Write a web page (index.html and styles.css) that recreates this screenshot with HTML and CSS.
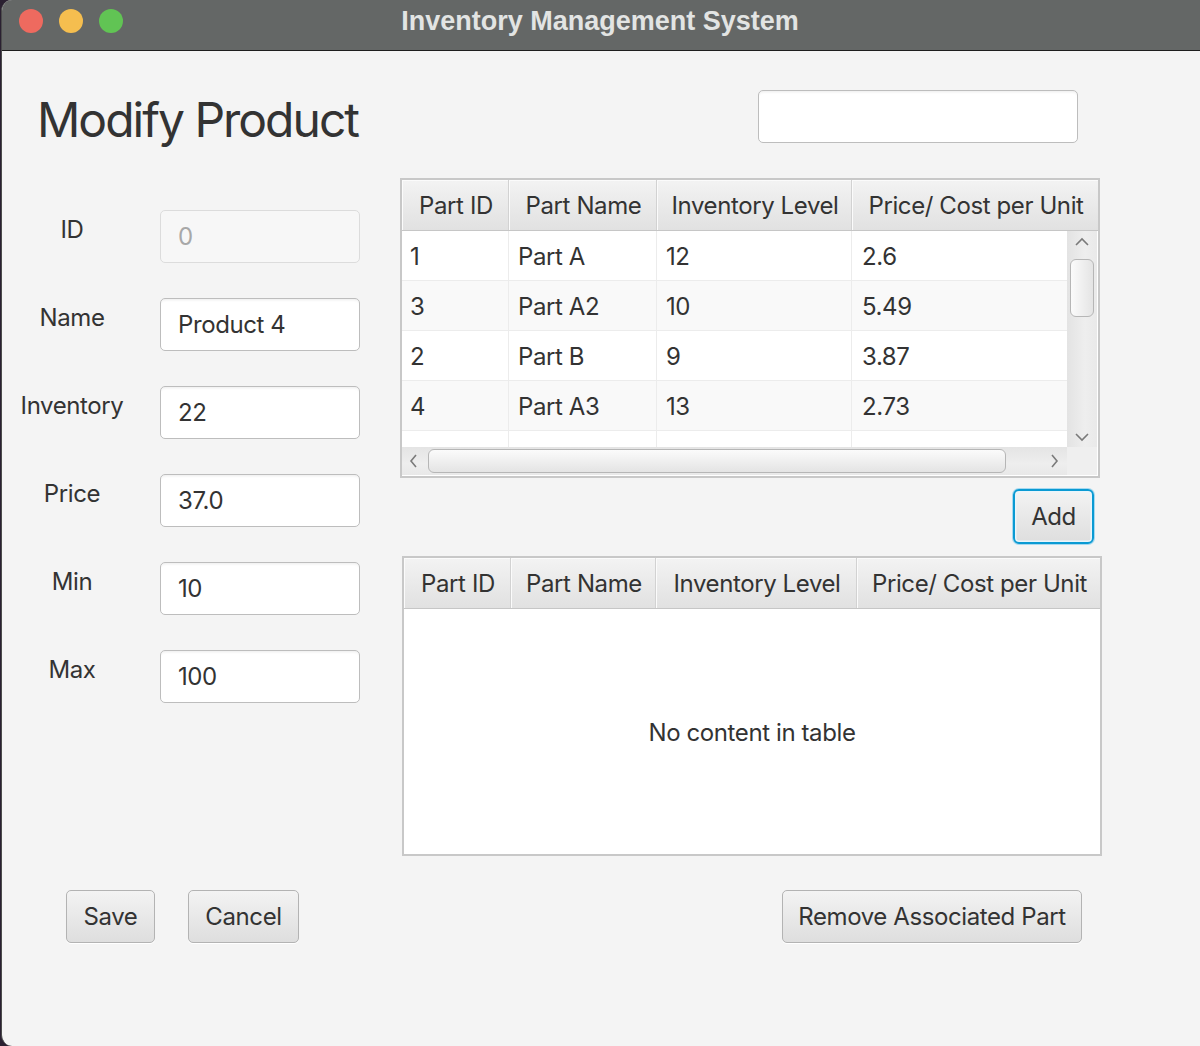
FILE: index.html
```html
<!DOCTYPE html>
<html lang="en">
<head>
<meta charset="utf-8">
<title>Inventory Management System</title>
<link rel="stylesheet" href="styles.css">
</head>
<body>
<div class="window">
  <header class="titlebar">
    <div class="lights">
      <span class="light red"></span>
      <span class="light yellow"></span>
      <span class="light green"></span>
    </div>
    <div class="wtitle">Inventory Management System</div>
  </header>

  <main class="content">
    <h1 class="heading">Modify Product</h1>
    <div class="search-wrap"><input class="field search" type="text" value=""></div>

    <section class="form">
      <label class="lbl">ID</label>
      <input class="field disabled" type="text" value="0" disabled>
      <label class="lbl">Name</label>
      <input class="field" type="text" value="Product 4">
      <label class="lbl">Inventory</label>
      <input class="field" type="text" value="22">
      <label class="lbl">Price</label>
      <input class="field" type="text" value="37.0">
      <label class="lbl">Min</label>
      <input class="field" type="text" value="10">
      <label class="lbl">Max</label>
      <input class="field" type="text" value="100">
    </section>

    <section class="tables">
      <div class="table top-table">
        <div class="thead">
          <div class="th">Part ID</div>
          <div class="th">Part Name</div>
          <div class="th">Inventory Level</div>
          <div class="th">Price/ Cost per Unit</div>
        </div>
        <div class="tbody-wrap">
          <div class="tbody">
            <div class="tr"><div class="td">1</div><div class="td">Part A</div><div class="td">12</div><div class="td">2.6</div></div>
            <div class="tr alt"><div class="td">3</div><div class="td">Part A2</div><div class="td">10</div><div class="td">5.49</div></div>
            <div class="tr"><div class="td">2</div><div class="td">Part B</div><div class="td">9</div><div class="td">3.87</div></div>
            <div class="tr alt"><div class="td">4</div><div class="td">Part A3</div><div class="td">13</div><div class="td">2.73</div></div>
            <div class="tr"><div class="td"></div><div class="td"></div><div class="td"></div><div class="td"></div></div>
          </div>
          <div class="vscroll">
            <svg class="arrow" width="30" height="22" viewBox="0 0 30 22"><polyline points="9,14 15,8 21,14" fill="none" stroke="#7a7a7a" stroke-width="1.6"/></svg>
            <div class="vthumb"></div>
            <div class="vspace"></div>
            <svg class="arrow" width="30" height="22" viewBox="0 0 30 22"><polyline points="9,9 15,15 21,9" fill="none" stroke="#7a7a7a" stroke-width="1.6"/></svg>
          </div>
          <div class="hscroll">
            <svg class="harrow" width="26" height="28" viewBox="0 0 26 28"><polyline points="14,8 9,14 14,20" fill="none" stroke="#7a7a7a" stroke-width="1.6"/></svg>
            <div class="hthumb"></div>
            <div class="hspace"></div>
            <svg class="harrow" width="26" height="28" viewBox="0 0 26 28"><polyline points="11,8 16,14 11,20" fill="none" stroke="#7a7a7a" stroke-width="1.6"/></svg>
          </div>
          <div class="corner"></div>
        </div>
      </div>

      <div class="add-row"><button class="btn focused">Add</button></div>

      <div class="table bottom-table">
        <div class="thead thead2">
          <div class="th">Part ID</div>
          <div class="th">Part Name</div>
          <div class="th">Inventory Level</div>
          <div class="th">Price/ Cost per Unit</div>
        </div>
        <div class="empty">No content in table</div>
      </div>
    </section>

    <div class="left-buttons">
      <button class="btn save">Save</button>
      <button class="btn cancel">Cancel</button>
    </div>
    <div class="right-buttons">
      <button class="btn remove">Remove Associated Part</button>
    </div>
  </main>
</div>
</body>
</html>
```

FILE: styles.css
```css
* { box-sizing: border-box; }

html, body {
  margin: 0;
  padding: 0;
  background: #2a2031;
  height: 1046px;
  overflow: hidden;
}

body {
  font-family: "Inter", "Liberation Sans", sans-serif;
  color: #333333;
}

.window {
  margin-left: 1px;
  width: 1210px;
  height: 1046px;
  display: flex;
  flex-direction: column;
  border-left: 1px solid #4b4b4b;
  border-radius: 11px;
  overflow: hidden;
  background: #f4f4f4;
}

/* ---------- title bar ---------- */
.titlebar {
  height: 51px;
  flex: none;
  background: #646766;
  border-bottom: 1px solid #1e1e1e;
  display: grid;
  grid-template-columns: 1fr;
  align-items: center;
  position: relative;
}

.lights {
  position: absolute;
  left: 17px;
  top: 9px;
  display: flex;
  gap: 16px;
}

.light {
  width: 24px;
  height: 24px;
  border-radius: 50%;
  display: block;
}
.red { background: #ee6a5f; }
.yellow { background: #f5be4f; }
.green { background: #61c454; }

.wtitle {
  text-align: center;
  font-family: "Liberation Sans", "Inter", sans-serif;
  font-weight: bold;
  font-size: 27px;
  color: #e2e4e3;
  width: 1196px;
  margin-top: -7px;
}

/* ---------- content grid ---------- */
.content {
  flex: 1;
  display: grid;
  grid-template-columns: 398px 700px;
  grid-template-rows: 53px 677px 53px;
  row-gap: 35px;
  padding-top: 39px;
  column-gap: 0;
}

.heading {
  margin: 0 0 0 35px;
  padding-top: 3px;
  font-family: "Inter", "Liberation Sans", sans-serif;
  font-weight: 400;
  font-size: 48px;
  line-height: 53px;
  letter-spacing: -2px;
  color: #333333;
  white-space: nowrap;
}

.search-wrap {
  display: flex;
  justify-content: flex-end;
  padding-right: 22px;
}

.field {
  display: block;
  width: 200px;
  height: 53px;
  border: 1.5px solid #bdbdbd;
  border-radius: 5px;
  background: #ffffff;
  box-shadow: inset 0 3px 3px -2px rgba(0,0,0,0.08);
  font-family: "Inter", "Liberation Sans", sans-serif;
  font-size: 24px;
  letter-spacing: -0.4px;
  color: #333333;
  padding: 0 0 0 17px;
  margin: 0;
  outline: none;
}

.search { width: 320px; }

.field.disabled {
  background: #f7f7f7;
  border-color: #dcdcdc;
  color: #a8a8a8;
  box-shadow: none;
  -webkit-text-fill-color: #a8a8a8;
  opacity: 1;
}

/* ---------- form ---------- */
.form {
  display: grid;
  grid-template-columns: 106px 200px;
  column-gap: 35px;
  grid-auto-rows: 53px;
  row-gap: 35px;
  padding: 32px 0 0 17px;
  align-content: start;
}

.lbl {
  text-align: center;
  font-size: 24px;
  line-height: 24px;
  letter-spacing: -0.4px;
  padding-top: 8px;
  color: #333333;
  white-space: nowrap;
}

/* ---------- tables ---------- */
.tables {
  display: flex;
  flex-direction: column;
  align-items: flex-start;
}

.table {
  width: 700px;
  height: 300px;
  flex: none;
  border: 2px solid #c8c8c8;
  background: #ffffff;
  display: flex;
  flex-direction: column;
}

.bottom-table { margin-left: 2px; }

.thead {
  display: grid;
  grid-template-columns: 107px 148px 195px 1fr;
  height: 51px;
  flex: none;
  border-bottom: 1.5px solid #c6c6c6;
}

.thead2 {
  grid-template-columns: 107px 145px 201px 1fr;
}

.th {
  background: linear-gradient(#f3f3f3, #e1e1e1);
  border-right: 1.5px solid #d2d2d2;
  box-shadow: inset 1px 1px 0 #fbfbfb;
  display: flex;
  align-items: center;
  justify-content: center;
  font-size: 24px;
  letter-spacing: -0.4px;
  color: #333333;
  white-space: nowrap;
  padding-left: 2px;
}
.th:last-child { border-right: none; }

.tbody-wrap {
  flex: 1;
  display: grid;
  grid-template-columns: 665px 30px;
  grid-template-rows: 216px 28px;
  overflow: hidden;
}

.tbody {
  overflow: hidden;
  background: #ffffff;
}

.tr {
  display: grid;
  grid-template-columns: 107px 148px 195px 1fr;
  height: 50px;
  background: #ffffff;
  border-bottom: 1.5px solid #ececec;
}
.tr.alt { background: #f9f9f9; }

.td {
  border-right: 1.5px solid #ececec;
  font-size: 24px;
  letter-spacing: -0.4px;
  line-height: 52px;
  padding-left: 8px;
  color: #333333;
  white-space: nowrap;
}
.td:nth-child(2), .td:nth-child(3) { padding-left: 9px; }
.td:last-child { border-right: none; padding-left: 10px; }

.vscroll {
  background: linear-gradient(90deg, #e3e3e3, #eeeeee 60%, #e9e9e9);
  display: flex;
  flex-direction: column;
  align-items: center;
}

.arrow { display: block; flex: none; }

.vthumb {
  width: 24px;
  height: 58px;
  margin-top: 6px;
  border: 1.5px solid #b6b6b6;
  border-radius: 6px;
  background: linear-gradient(90deg, #fbfbfb, #e4e4e4);
  flex: none;
}

.vspace { flex: 1; }

.hscroll {
  background: linear-gradient(#e4e4e4, #eeeeee 60%, #e8e8e8);
  display: flex;
  align-items: center;
}

.harrow { display: block; flex: none; }

.hthumb {
  width: 578px;
  height: 24px;
  flex: none;
  border: 1.5px solid #b6b6b6;
  border-radius: 6px;
  background: linear-gradient(#fbfbfb, #e4e4e4);
}

.hspace { flex: 1; }

.corner { background: #efefef; }

.empty {
  flex: 1;
  display: flex;
  align-items: center;
  justify-content: center;
  font-size: 24px;
  letter-spacing: -0.4px;
  color: #333333;
  padding-top: 2px;
}

.add-row {
  width: 700px;
  display: flex;
  justify-content: flex-end;
  padding: 11px 6px 0 0;
  height: 78px;
  flex: none;
}

/* ---------- buttons ---------- */
.btn {
  height: 53px;
  border: 1.5px solid #b3b3b3;
  border-radius: 5px;
  background: linear-gradient(#f3f3f3, #dedede);
  box-shadow: 0 1px 0 #ffffff;
  font-family: "Inter", "Liberation Sans", sans-serif;
  font-size: 24px;
  letter-spacing: -0.4px;
  color: #333333;
  padding: 0 16px;
  margin: 0;
  cursor: default;
}

.btn.focused {
  width: 81px;
  height: 55px;
  border: 2px solid #0a9ad3;
  box-shadow: 0 0 0 1px #a6d9f0, inset 0 0 0 1.5px #e9f5fb;
  border-radius: 6px;
  padding: 0;
}

.left-buttons {
  display: flex;
  gap: 33px;
  padding-left: 64px;
  align-items: flex-start;
}

.save { width: 89px; padding: 0; }
.cancel { width: 111px; padding: 0; }

.right-buttons {
  display: flex;
  padding-left: 382px;
  align-items: flex-start;
}

.remove { width: 300px; padding: 0; }
```
